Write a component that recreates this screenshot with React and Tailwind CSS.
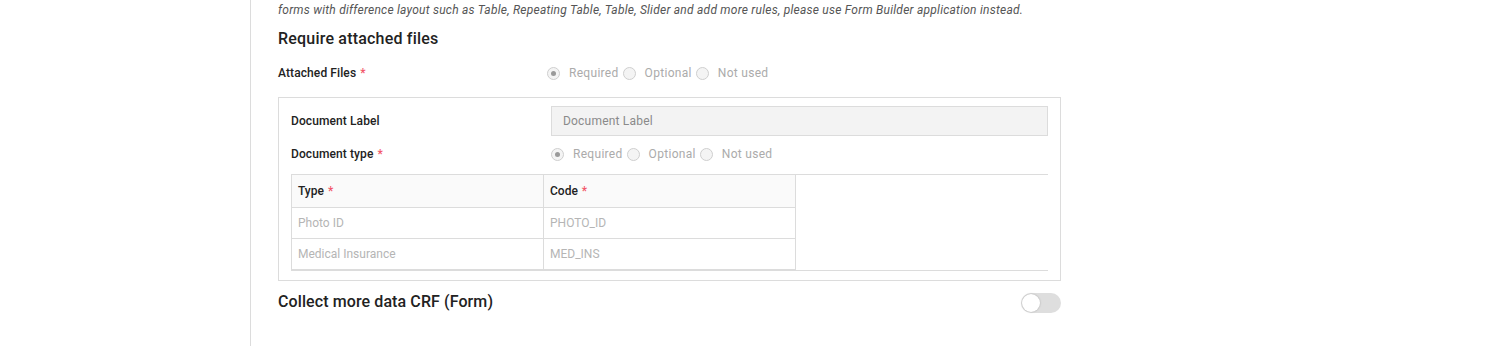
import React from "react";

const Radio = ({ label, checked }) => (
  <label className="flex items-center">
    <span className="w-[13px] h-[13px] rounded-full border border-[#cfcfcf] bg-[#f4f4f4] flex items-center justify-center">
      {checked && <span className="w-[5px] h-[5px] rounded-full bg-[#9a9a9a]"></span>}
    </span>
    <span className="ml-[9px] mr-[4px] text-[12px] tracking-[0.3px] text-[#ababab]">{label}</span>
  </label>
);

const RadioGroup = () => (
  <div className="flex items-center">
    <Radio label="Required" checked />
    <Radio label="Optional" />
    <Radio label="Not used" />
  </div>
);

const Star = () => <span className="ml-[4px] text-[#f2576a]">*</span>;

const rows = [
  { type: "Photo ID", code: "PHOTO_ID" },
  { type: "Medical Insurance", code: "MED_INS" },
];

export default function App() {
  return (
    <div className="min-h-[346px] bg-white flex font-['Roboto',sans-serif] text-[#222]">
      <div className="w-[250px] shrink-0"></div>
      <div className="w-[811px] border-l border-[#dcdcdc] pl-[27px] min-h-[346px]">
        <p className="pt-[2px] text-[12px] leading-[16px] italic tracking-[0.24px] text-[#555] whitespace-nowrap">
          forms with difference layout such as Table, Repeating Table, Table, Slider and add more rules, please use Form Builder application instead.
        </p>

        <h2 className="mt-[9px] text-[16px] leading-[24px] font-medium tracking-[0.2px]">Require attached files</h2>

        <div className="mt-[10px] flex items-center h-[24px]">
          <div className="w-[269px] text-[12px] font-medium tracking-[0.1px]">
            Attached Files
            <Star />
          </div>
          <RadioGroup />
        </div>

        <div className="mt-[12px] border border-[#dcdcdc] px-[12px] pt-[8px] pb-[9px]">
          <div className="flex items-center">
            <div className="w-[260px] text-[12px] font-medium tracking-[0.1px]">Document Label</div>
            <input
              placeholder="Document Label"
              className="flex-1 h-[30px] border border-[#dcdcdc] bg-[#f3f3f3] px-[11px] text-[12px] tracking-[0.2px] placeholder:text-[#8a8a8a] outline-none"
            />
          </div>

          <div className="mt-[6px] flex items-center h-[24px]">
            <div className="w-[260px] text-[12px] font-medium tracking-[0.1px]">
              Document type
              <Star />
            </div>
            <RadioGroup />
          </div>

          <div className="mt-[8px] border-t border-b border-[#dcdcdc]">
            <table className="w-[505px] border-collapse text-[12px]">
              <thead>
                <tr className="bg-[#fafafa]">
                  <th className="w-[252px] h-[32px] border-l border-r border-b border-[#dcdcdc] px-[6px] text-left font-medium">
                    Type
                    <Star />
                  </th>
                  <th className="w-[252px] h-[32px] border-r border-b border-[#dcdcdc] px-[6px] text-left font-medium">
                    Code
                    <Star />
                  </th>
                </tr>
              </thead>
              <tbody>
                {rows.map((r) => (
                  <tr key={r.code}>
                    <td className="h-[31px] border-l border-r border-b border-[#dcdcdc] px-[6px] text-[#b5b5b5]">{r.type}</td>
                    <td className="h-[31px] border-r border-b border-[#dcdcdc] px-[6px] text-[#b5b5b5]">{r.code}</td>
                  </tr>
                ))}
              </tbody>
            </table>
          </div>
        </div>

        <div className="mt-[9px] flex items-start justify-between">
          <h2 className="text-[16px] leading-[24px] font-medium tracking-[0.1px]">Collect more data CRF (Form)</h2>
          <div className="mt-[3px] w-[40px] h-[20px] rounded-full bg-[#dedede] p-[1px]">
            <div className="w-[18px] h-[18px] rounded-full bg-white shadow-[0_0_2px_rgba(0,0,0,0.25)]"></div>
          </div>
        </div>
      </div>
    </div>
  );
}
